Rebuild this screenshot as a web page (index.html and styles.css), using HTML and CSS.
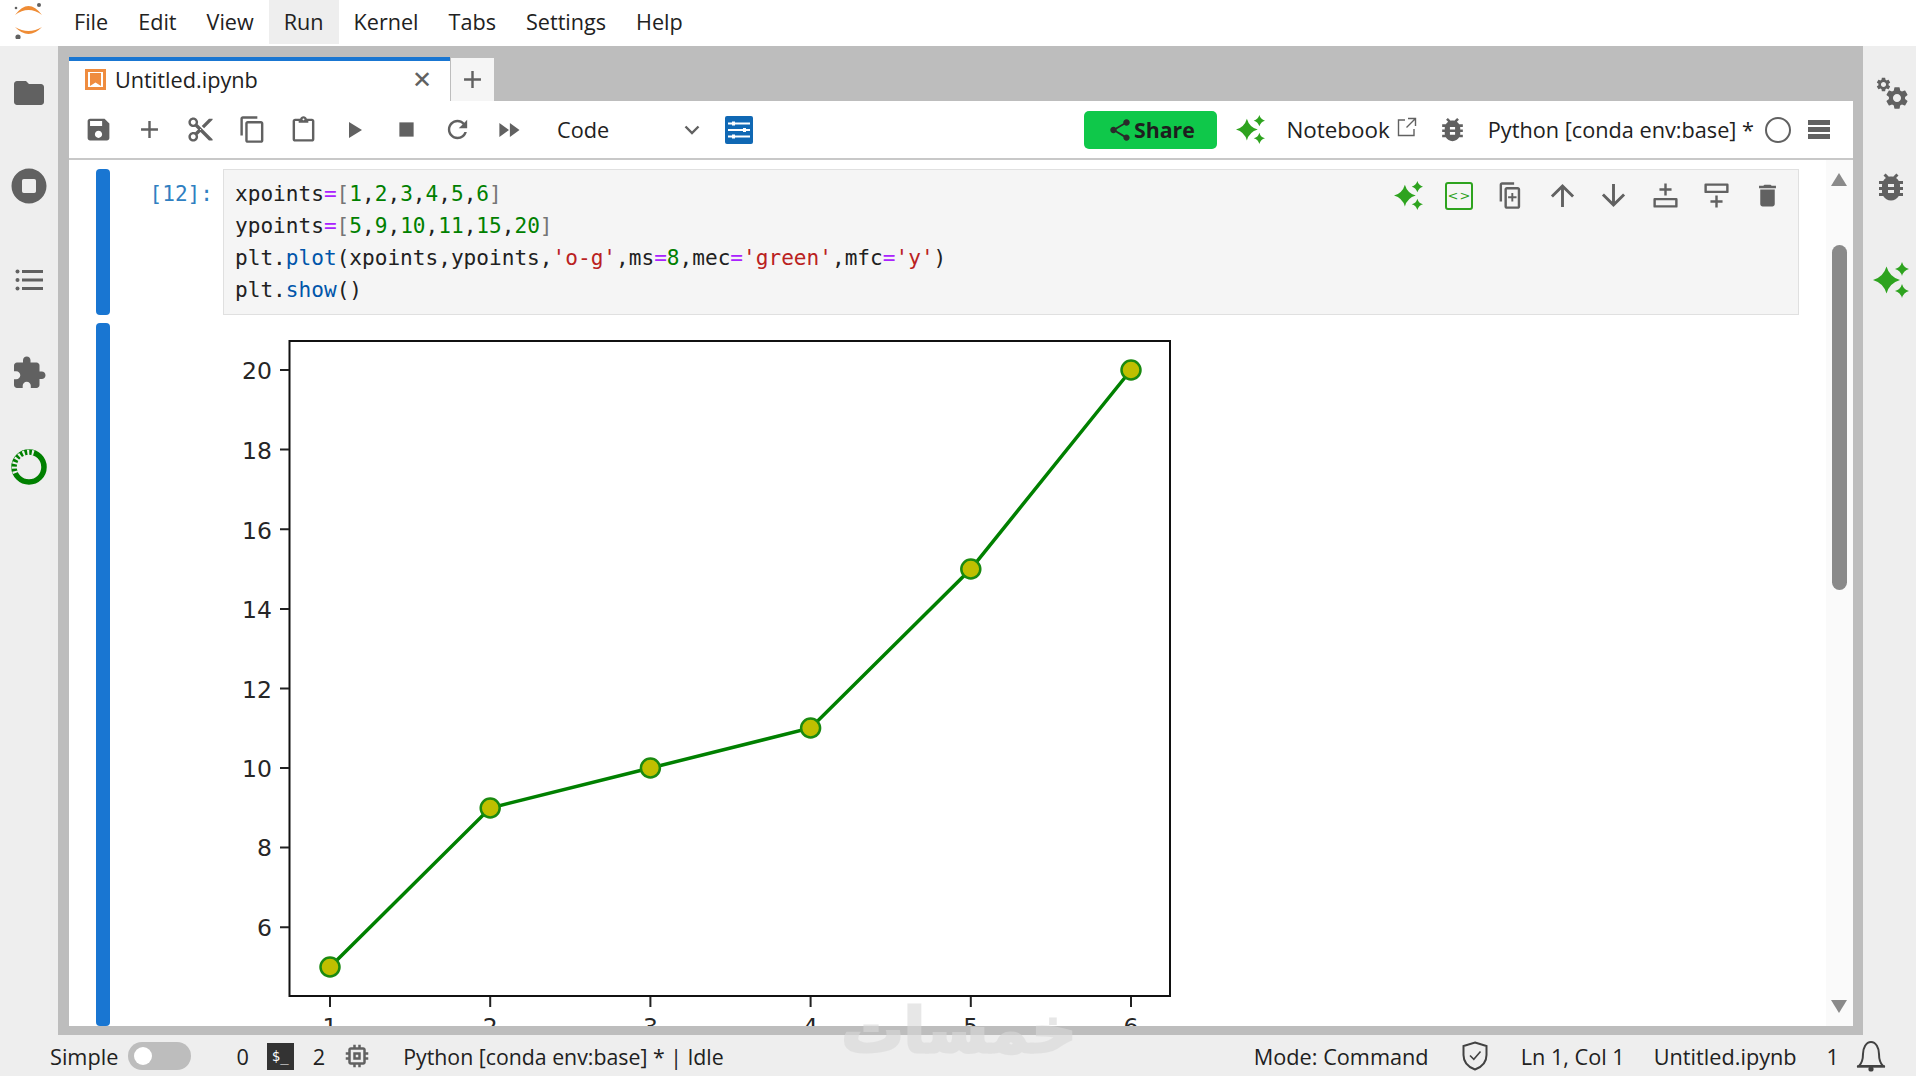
FILE: index.html
```html
<!DOCTYPE html>
<html lang="en">
<head>
<meta charset="utf-8">
<title>Untitled.ipynb</title>
<link rel="stylesheet" href="styles.css">
</head>
<body>
<svg class="defs" aria-hidden="true">
  <symbol id="i-save" viewBox="0 0 24 24"><path d="M17 3H5c-1.11 0-2 .9-2 2v14c0 1.1.89 2 2 2h14c1.1 0 2-.9 2-2V7l-4-4zm-5 16c-1.66 0-3-1.34-3-3s1.34-3 3-3 3 1.34 3 3-1.34 3-3 3zm3-10H5V5h10v4z"/></symbol>
  <symbol id="i-add" viewBox="0 0 24 24"><path d="M19 13h-6v6h-2v-6H5v-2h6V5h2v6h6v2z"/></symbol>
  <symbol id="i-cut" viewBox="0 0 24 24"><path d="M9.64 7.64c.23-.5.36-1.05.36-1.64 0-2.21-1.79-4-4-4S2 3.79 2 6s1.79 4 4 4c.59 0 1.14-.13 1.64-.36L10 12l-2.36 2.36C7.14 14.13 6.59 14 6 14c-2.21 0-4 1.79-4 4s1.79 4 4 4 4-1.79 4-4c0-.59-.13-1.14-.36-1.64L12 14l7 7h3v-1L9.64 7.64zM6 8c-1.1 0-2-.89-2-2s.9-2 2-2 2 .89 2 2-.9 2-2 2zm0 12c-1.1 0-2-.89-2-2s.9-2 2-2 2 .89 2 2-.9 2-2 2zm6-7.5c-.28 0-.5-.22-.5-.5s.22-.5.5-.5.5.22.5.5-.22.5-.5.5zM19 3l-6 6 2 2 7-7V3z"/></symbol>
  <symbol id="i-copy" viewBox="0 0 24 24"><path d="M16 1H4c-1.1 0-2 .9-2 2v14h2V3h12V1zm3 4H8c-1.1 0-2 .9-2 2v14c0 1.1.9 2 2 2h11c1.1 0 2-.9 2-2V7c0-1.1-.9-2-2-2zm0 16H8V7h11v14z"/></symbol>
  <symbol id="i-paste" viewBox="0 0 24 24"><path d="M19 3h-4.2C14.4 1.8 13.3 1 12 1s-2.400.8-2.800 2H5c-1.100 0-2 .9-2 2v15c0 1.100.9 2 2 2h14c1.100 0 2-.9 2-2V5c0-1.100-.9-2-2-2zm-7-.2c.45 0 .8.35.8.8s-.35.8-.8.8-.8-.35-.8-.8.35-.8.8-.8zM19 20H5V5h3v1.500h8V5h3v15z"/></symbol>
  <symbol id="i-play" viewBox="0 0 24 24"><path d="M6 4l13 8-13 8z"/></symbol>
  <symbol id="i-stop" viewBox="0 0 24 24"><rect x="3" y="3" width="18" height="18"/></symbol>
  <symbol id="i-refresh" viewBox="0 0 24 24"><path d="M17.650 6.350C16.200 4.900 14.210 4 12 4c-4.420 0-7.990 3.580-7.990 8s3.570 8 7.990 8c3.730 0 6.840-2.550 7.730-6h-2.080c-.82 2.330-3.040 4-5.650 4-3.310 0-6-2.690-6-6s2.690-6 6-6c1.660 0 3.140.69 4.220 1.780L13 11h7V4l-2.350 2.350z"/></symbol>
  <symbol id="i-ff" viewBox="0 0 24 16"><path d="M1 0l11 8-11 8zM13 0l11 8-11 8z"/></symbol>
  <symbol id="i-chev" viewBox="0 0 24 24"><path d="M5.500 8.500L12 15l6.500-6.500" fill="none" stroke="currentColor" stroke-width="2.400"/></symbol>
  <symbol id="i-bug" viewBox="0 0 24 24"><path d="M20 8h-2.810c-.45-.78-1.070-1.450-1.820-1.960L17 4.410 15.590 3l-2.170 2.170C12.960 5.060 12.490 5 12 5c-.49 0-.96.06-1.410.17L8.410 3 7 4.410l1.620 1.630C7.880 6.550 7.260 7.220 6.810 8H4v2h2.090c-.05.33-.09.66-.09 1v1H4v2h2v1c0 .34.04.67.09 1H4v2h2.810c1.040 1.790 2.970 3 5.190 3s4.150-1.210 5.190-3H20v-2h-2.090c.05-.33.09-.66.09-1v-1h2v-2h-2v-1c0-.34-.04-.67-.09-1H20V8zm-6 8h-4v-2h4v2zm0-4h-4v-2h4v2z"/></symbol>
  <symbol id="i-folder" viewBox="0 0 24 24"><path d="M10 4H4c-1.100 0-1.990.9-1.990 2L2 18c0 1.100.9 2 2 2h16c1.100 0 2-.9 2-2V8c0-1.100-.9-2-2-2h-8l-2-2z"/></symbol>
  <symbol id="i-stopc" viewBox="0 0 24 24"><path d="M12 2C6.480 2 2 6.480 2 12s4.480 10 10 10 10-4.480 10-10S17.520 2 12 2zm4 13a1 1 0 0 1-1 1H9a1 1 0 0 1-1-1V9a1 1 0 0 1 1-1h6a1 1 0 0 1 1 1v6z"/></symbol>
  <symbol id="i-list" viewBox="0 0 28 24"><circle cx="2.500" cy="3.500" r="2"/><circle cx="2.500" cy="12" r="2"/><circle cx="2.500" cy="20.500" r="2"/><rect x="7" y="2" width="21" height="3"/><rect x="7" y="10.500" width="21" height="3"/><rect x="7" y="19" width="21" height="3"/></symbol>
  <symbol id="i-puzzle" viewBox="0 0 24 24"><path d="M20.500 11H19V7c0-1.100-.9-2-2-2h-4V3.500C13 2.120 11.880 1 10.500 1S8 2.120 8 3.500V5H4c-1.100 0-1.990.9-1.990 2v3.800H3.500c1.490 0 2.700 1.210 2.700 2.700s-1.210 2.700-2.700 2.700H2V20c0 1.100.9 2 2 2h3.800v-1.500c0-1.490 1.210-2.700 2.700-2.700 1.490 0 2.700 1.210 2.700 2.700V22H17c1.100 0 2-.9 2-2v-4h1.500c1.380 0 2.500-1.120 2.500-2.500S21.880 11 20.500 11z"/></symbol>
  <symbol id="i-gear" viewBox="0 0 24 24"><path d="M19.140 12.940c.04-.3.06-.61.06-.94 0-.32-.02-.64-.07-.94l2.030-1.580c.18-.14.23-.41.12-.61l-1.920-3.320c-.12-.22-.37-.29-.59-.22l-2.390.96c-.5-.38-1.030-.7-1.620-.94l-.36-2.540c-.04-.24-.24-.41-.48-.41h-3.840c-.24 0-.43.17-.47.41l-.36 2.540c-.59.24-1.130.57-1.620.94l-2.390-.96c-.22-.08-.47 0-.59.22L2.740 8.870c-.12.21-.08.47.12.61l2.030 1.580c-.05.3-.09.63-.09.94s.02.64.07.94l-2.030 1.580c-.18.14-.23.41-.12.61l1.920 3.320c.12.22.37.29.59.22l2.390-.96c.5.38 1.030.7 1.620.94l.36 2.540c.05.24.24.41.48.41h3.840c.24 0 .44-.17.47-.41l.36-2.540c.59-.24 1.130-.56 1.620-.94l2.390.96c.22.08.47 0 .59-.22l1.920-3.320c.12-.22.07-.47-.12-.61l-2.010-1.580zM12 15.600c-1.980 0-3.600-1.620-3.600-3.600s1.620-3.600 3.600-3.600 3.600 1.620 3.600 3.600-1.620 3.600-3.600 3.600z"/></symbol>
  <symbol id="i-spark" viewBox="0 0 36 36"><path d="M13.500 4.500Q16.500 15 27 18 16.500 21 13.500 31.500 10.500 21 0 18 10.500 15 13.500 4.500zM29 0Q30.500 5.500 36 7 30.500 8.500 29 14 27.500 8.500 22 7 27.500 5.500 29 0zM29 22Q30.500 27.500 36 29 30.500 30.500 29 36 27.500 30.500 22 29 27.500 27.500 29 22z"/></symbol>
  <symbol id="i-share" viewBox="0 0 24 24"><path d="M18 16.080c-.76 0-1.440.3-1.960.77L8.910 12.700c.05-.23.09-.46.09-.7s-.04-.47-.09-.7l7.050-4.110c.54.5 1.250.81 2.040.81 1.660 0 3-1.340 3-3s-1.340-3-3-3-3 1.340-3 3c0 .24.04.47.09.7L8.040 9.810C7.500 9.310 6.790 9 6 9c-1.660 0-3 1.340-3 3s1.340 3 3 3c.79 0 1.500-.31 2.040-.81l7.120 4.160c-.05.21-.08.43-.08.65 0 1.610 1.310 2.920 2.920 2.920 1.610 0 2.920-1.310 2.920-2.920s-1.310-2.920-2.920-2.920z"/></symbol>
  <symbol id="i-chip" viewBox="0 0 24 24"><path d="M15 9H9v6h6V9zm-2 4h-2v-2h2v2zm8-2V9h-2V7c0-1.100-.9-2-2-2h-2V3h-2v2h-2V3H9v2H7c-1.100 0-2 .9-2 2v2H3v2h2v2H3v2h2v2c0 1.100.9 2 2 2h2v2h2v-2h2v2h2v-2h2c1.100 0 2-.9 2-2v-2h2v-2h-2v-2h2zm-4 6H7V7h10v10z"/></symbol>
  <symbol id="i-up" viewBox="2 2 20 20"><path d="M4 12l1.410 1.410L11 7.830V20h2V7.830l5.580 5.590L20 12l-8-8-8 8z"/></symbol>
  <symbol id="i-down" viewBox="2 2 20 20"><path d="M20 12l-1.410-1.410L13 16.170V4h-2v12.170l-5.580-5.590L4 12l8 8 8-8z"/></symbol>
  <symbol id="i-trash" viewBox="0 0 24 24"><path d="M6 19c0 1.100.9 2 2 2h8c1.100 0 2-.9 2-2V7H6v12zM19 4h-3.500l-1-1h-5l-1 1H5v2h14V4z"/></symbol>
  <symbol id="i-above" viewBox="0 0 24 24"><path d="M11 2h2v4h4v2h-4v4h-2V8H7V6h4z"/><path fill-rule="evenodd" d="M3 14h18a1 1 0 0 1 1 1v6a1 1 0 0 1-1 1H3a1 1 0 0 1-1-1v-6a1 1 0 0 1 1-1zm1 2v4h16v-4z"/></symbol>
  <symbol id="i-below" viewBox="0 0 24 24"><path d="M11 12h2v4h4v2h-4v4h-2v-4H7v-2h4z"/><path fill-rule="evenodd" d="M3 2h18a1 1 0 0 1 1 1v6a1 1 0 0 1-1 1H3a1 1 0 0 1-1-1V3a1 1 0 0 1 1-1zm1 2v4h16V4z"/></symbol>
  <symbol id="i-dup" viewBox="0 0 24 24"><path d="M15 1H5C3.900 1 3 1.900 3 3v14h2V3h10V1zm3 4H9c-1.100 0-2 .9-2 2v14c0 1.100.9 2 2 2h9c1.100 0 2-.9 2-2V7c0-1.100-.9-2-2-2zm0 16H9V7h9v14zM12.700 10h1.600v2.700H17v1.600h-2.700V17h-1.600v-2.700H10v-1.600h2.700z"/></symbol>
  <symbol id="i-ext" viewBox="0 0 20 20"><path d="M8 3H1.500v15.500H17V12M11 1.500h7.500V9M18 2l-8.500 8.500" fill="none" stroke="currentColor" stroke-width="1.400"/></symbol>
  <symbol id="i-shield" viewBox="0 0 26 30"><path d="M13 1.500L24.500 5v9c0 7-4.500 12-11.500 14.500C6 26 1.500 21 1.500 14V5z" fill="none" stroke="currentColor" stroke-width="2"/><path d="M8 14.500l3.800 3.800L18.500 10.500" fill="none" stroke="currentColor" stroke-width="1.600"/></symbol>
  <symbol id="i-bell" viewBox="0 0 30 32"><path d="M3 26c3-3 4-6 4-12 0-6 3-12 8-12s8 6 8 12c0 6 1 9 4 12z" fill="none" stroke="currentColor" stroke-width="2"/><path d="M1 26.500h28" stroke="currentColor" stroke-width="2.400"/><circle cx="15" cy="29" r="2.600"/></symbol>
</svg>

<header class="menubar">
  <svg class="logo" viewBox="0 0 28 36" aria-hidden="true">
    <path class="logo-arc" d="M1 12Q14.500-6 28 12 14.500 2 1 12z"/>
    <path class="logo-arc" d="M1 24Q14.500 38 28 24 14.500 32 1 24z"/>
    <circle class="logo-dot" cx="25" cy="2" r="2"/>
    <circle class="logo-dot" cx="2" cy="5" r="1.300"/>
    <circle class="logo-dot" cx="4" cy="34" r="2.600"/>
  </svg>
  <nav class="menu">
    <span class="menu-item">File</span>
    <span class="menu-item">Edit</span>
    <span class="menu-item">View</span>
    <span class="menu-item is-open">Run</span>
    <span class="menu-item">Kernel</span>
    <span class="menu-item">Tabs</span>
    <span class="menu-item">Settings</span>
    <span class="menu-item">Help</span>
  </nav>
</header>

<div class="workspace">
  <aside class="sidebar sidebar-left">
    <div class="side-slot"><svg class="ic ic-36"><use href="#i-folder"/></svg></div>
    <div class="side-slot"><svg class="ic ic-42"><use href="#i-stopc"/></svg></div>
    <div class="side-slot"><svg class="ic ic-list"><use href="#i-list"/></svg></div>
    <div class="side-slot"><svg class="ic ic-36"><use href="#i-puzzle"/></svg></div>
    <div class="side-slot">
      <svg class="ring" viewBox="0 0 36 36" aria-hidden="true">
        <circle class="ring-track" cx="18" cy="18" r="15"/>
        <path class="ring-dash" d="M4.500 24A15 15 0 0 1 24 4.500"/>
      </svg>
    </div>
  </aside>

  <main class="center">
    <div class="tabbar">
      <div class="tab">
        <svg class="nb-icon" viewBox="0 0 21 21" aria-hidden="true">
          <rect class="nb-frame" x="1.500" y="1.500" width="18" height="18"/>
          <path class="nb-mark" d="M5 4h11v13l-5.500-3.500L5 17z"/>
        </svg>
        <span class="tab-label">Untitled.ipynb</span>
        <span class="tab-close">&#x2715;</span>
      </div>
      <div class="tab-add"><svg class="ic ic-29"><use href="#i-add"/></svg></div>
    </div>

    <div class="toolbar">
      <span class="tool"><svg class="ic ic-29"><use href="#i-save"/></svg></span>
      <span class="tool"><svg class="ic ic-29"><use href="#i-add"/></svg></span>
      <span class="tool"><svg class="ic ic-29"><use href="#i-cut"/></svg></span>
      <span class="tool"><svg class="ic ic-29"><use href="#i-copy"/></svg></span>
      <span class="tool"><svg class="ic ic-29"><use href="#i-paste"/></svg></span>
      <span class="tool"><svg class="ic ic-play"><use href="#i-play"/></svg></span>
      <span class="tool"><svg class="ic ic-stop"><use href="#i-stop"/></svg></span>
      <span class="tool"><svg class="ic ic-29"><use href="#i-refresh"/></svg></span>
      <span class="tool"><svg class="ic ic-ff"><use href="#i-ff"/></svg></span>
      <div class="celltype">
        <span>Code</span>
        <svg class="ic ic-chev"><use href="#i-chev"/></svg>
      </div>
      <svg class="tune" viewBox="0 0 28 28" aria-hidden="true">
        <rect width="28" height="28" rx="2" class="tune-bg"/>
        <path class="tune-line" d="M3 7.500h22M3 14h22M3 20.500h22"/>
        <rect class="tune-knob" x="7" y="5.500" width="3" height="4"/>
        <rect class="tune-knob" x="18" y="12" width="3" height="4"/>
        <rect class="tune-knob" x="7" y="18.500" width="3" height="4"/>
      </svg>
      <div class="toolbar-right">
        <button class="share"><svg class="ic ic-share"><use href="#i-share"/></svg>Share</button>
        <svg class="ic ic-spark spark-top"><use href="#i-spark"/></svg>
        <span class="nb-link">Notebook</span>
        <svg class="ic ic-ext"><use href="#i-ext"/></svg>
        <svg class="ic ic-bug"><use href="#i-bug"/></svg>
        <span class="kernel-name">Python [conda env:base] *</span>
        <span class="kernel-state"></span>
        <span class="hamburger"></span>
      </div>
    </div>

    <div class="panel">
      <div class="notebook">
        <section class="cell">
          <div class="collapser"></div>
          <div class="prompt">[12]:</div>
          <div class="editor">
<pre class="code">xpoints<span class="op">=</span><span class="br">[</span><span class="num">1</span>,<span class="num">2</span>,<span class="num">3</span>,<span class="num">4</span>,<span class="num">5</span>,<span class="num">6</span><span class="br">]</span>
ypoints<span class="op">=</span><span class="br">[</span><span class="num">5</span>,<span class="num">9</span>,<span class="num">10</span>,<span class="num">11</span>,<span class="num">15</span>,<span class="num">20</span><span class="br">]</span>
plt.<span class="fn">plot</span>(xpoints,ypoints,<span class="str">'o-g'</span>,ms<span class="op">=</span><span class="num">8</span>,mec<span class="op">=</span><span class="str">'green'</span>,mfc<span class="op">=</span><span class="str">'y'</span>)
plt.<span class="fn">show</span>()</pre>
            <div class="cell-tools">
              <span class="tool"><svg class="ic ic-spark ic-29"><use href="#i-spark"/></svg></span>
              <span class="tool"><span class="codebox">&lt;&gt;</span></span>
              <span class="tool"><svg class="ic ic-29"><use href="#i-dup"/></svg></span>
              <span class="tool"><svg class="ic ic-29"><use href="#i-up"/></svg></span>
              <span class="tool"><svg class="ic ic-29"><use href="#i-down"/></svg></span>
              <span class="tool"><svg class="ic ic-29"><use href="#i-above"/></svg></span>
              <span class="tool"><svg class="ic ic-29"><use href="#i-below"/></svg></span>
              <span class="tool"><svg class="ic ic-29"><use href="#i-trash"/></svg></span>
            </div>
          </div>
        </section>
        <section class="cell cell-output">
          <div class="collapser"></div>
          <div class="prompt"></div>
          <svg class="plot" viewBox="223 323 960 720" aria-label="Line plot">
            <rect class="axes" x="289.500" y="341" width="880.500" height="655"/>
            <g class="ticks">
              <path d="M280 370h9M280 449.600h9M280 529.200h9M280 609h9M280 688.400h9M280 768h9M280 847.600h9M280 927.200h9"/>
              <path d="M330 997v10M490.200 997v10M650.400 997v10M810.600 997v10M970.800 997v10M1131 997v10"/>
            </g>
            <g class="ylabels">
              <text x="272" y="379">20</text><text x="272" y="458.500">18</text><text x="272" y="538.500">16</text><text x="272" y="618">14</text><text x="272" y="697.500">12</text><text x="272" y="777">10</text><text x="272" y="856">8</text><text x="272" y="936">6</text>
            </g>
            <g class="xlabels">
              <text x="330" y="1035">1</text><text x="490.200" y="1035">2</text><text x="650.400" y="1035">3</text><text x="810.600" y="1035">4</text><text x="970.800" y="1035">5</text><text x="1131" y="1035">6</text>
            </g>
            <polyline class="series" points="330,967 490.200,808 650.400,768 810.600,728 970.800,569 1131,370"/>
            <g class="markers">
              <circle cx="330" cy="967" r="9.500"/><circle cx="490.200" cy="808" r="9.500"/><circle cx="650.400" cy="768" r="9.500"/><circle cx="810.600" cy="728" r="9.500"/><circle cx="970.800" cy="569" r="9.500"/><circle cx="1131" cy="370" r="9.500"/>
            </g>
          </svg>
        </section>
      </div>
      <div class="scrollbar">
        <span class="arrow arrow-up"></span>
        <span class="thumb"></span>
        <span class="arrow arrow-down"></span>
      </div>
    </div>
  </main>

  <aside class="sidebar sidebar-right">
    <svg class="gears" viewBox="0 0 36 36" aria-hidden="true">
      <use href="#i-gear" x="8.500" y="10.500" width="27" height="27"/>
      <use href="#i-gear" x="0" y="2" width="17" height="17"/>
    </svg>
    <svg class="ic ic-36 side-bug"><use href="#i-bug"/></svg>
    <svg class="ic ic-spark ic-36 side-spark"><use href="#i-spark"/></svg>
  </aside>
</div>

<footer class="statusbar">
  <span class="st-simple">Simple</span>
  <span class="toggle"><span class="knob"></span></span>
  <span class="st-zero">0</span>
  <span class="term">$_</span>
  <span class="st-two">2</span>
  <svg class="ic ic-chip"><use href="#i-chip"/></svg>
  <span class="st-kernel">Python [conda env:base] * | Idle</span>
  <span class="st-mode">Mode: Command</span>
  <svg class="ic ic-shield"><use href="#i-shield"/></svg>
  <span class="st-ln">Ln 1, Col 1</span>
  <span class="st-file">Untitled.ipynb</span>
  <span class="st-one">1</span>
  <svg class="ic ic-bell"><use href="#i-bell"/></svg>
</footer>

<div class="watermark" lang="ar" dir="rtl">خمسات</div>
</body>
</html>
```

FILE: styles.css
```css
* { box-sizing: border-box; }
html, body { margin: 0; height: 100%; }
body {
  display: flex;
  flex-direction: column;
  height: 1076px;
  overflow: hidden;
  position: relative;
  background: #bdbdbd;
  color: #212121;
  font-family: "Open Sans", "Noto Sans", sans-serif;
  font-size: 21.700px;
}
.defs { position: absolute; width: 0; height: 0; }
.ic { fill: #616161; color: #616161; display: block; flex: none; }
.ic-29 { width: 29px; height: 29px; }
.ic-36 { width: 36px; height: 36px; }
.ic-42 { width: 42px; height: 42px; }
.ic-list { width: 28px; height: 24px; }
.ic-play { width: 24px; height: 24px; }
.ic-stop { width: 19px; height: 19px; }
.ic-ff { width: 22px; height: 14px; }
.ic-chev { width: 24px; height: 24px; }
.ic-share { width: 26px; height: 26px; fill: #2a2a2a; margin-right: 1px; }
.ic-ext { width: 20px; height: 20px; margin: -6px 0 0 7px; }
.ic-bug { width: 31px; height: 31px; margin-left: 20px; }
.ic-chip { width: 30px; height: 30px; }
.ic-shield { width: 26px; height: 30px; color: #424242; fill: #424242; }
.ic-bell { width: 30px; height: 32px; color: #424242; fill: #424242; }
.ic-spark { fill: #2ea31f; }
.spark-top { width: 31px; height: 29px; margin-left: 18px; }

/* menu */
.menubar {
  flex: none;
  height: 46px;
  background: #fff;
  display: flex;
  align-items: flex-start;
}
.logo { width: 28px; height: 36px; margin: 3px 0 0 14px; flex: none; }
.logo-arc { fill: #ef8c35; }
.logo-dot { fill: #616161; }
.menu { display: flex; margin-left: 17px; font-size: 21.600px; }
.menu-item { height: 44px; line-height: 43px; padding: 0 15px; }
.menu-item.is-open { background: #eee; }

/* frame */
.workspace { flex: 1; display: flex; min-height: 0; }
.sidebar { flex: none; background: #eee; }
.sidebar-left { width: 58px; display: flex; flex-direction: column; }
.side-slot { height: 93.500px; display: flex; align-items: center; justify-content: center; }
.ring { width: 36px; height: 36px; }
.ring-track { fill: none; stroke: #008000; stroke-width: 5.500; }
.ring-dash { fill: none; stroke: #eee; stroke-width: 5.500; stroke-dasharray: 2 2.500; }
.sidebar-right { width: 53px; display: flex; flex-direction: column; align-items: center; padding-top: 28px; }
.gears { width: 36px; height: 36px; fill: #616161; margin-left: 6px; overflow: visible; }
.side-bug { margin: 59px 0 0 2px; }
.side-spark { margin: 57px 0 0 2px; }

.center { flex: 1; min-width: 0; display: flex; flex-direction: column; padding: 11px 10px 9px 11px; }
.tabbar { flex: none; height: 44px; display: flex; align-items: flex-end; }
.tab {
  width: 381px;
  height: 44px;
  background: #fff;
  border-top: 4px solid #1976d2;
  display: flex;
  align-items: center;
  padding: 0 0 3px 16px;
}
.nb-icon { width: 21px; height: 21px; flex: none; margin-right: 9px; }
.nb-frame { fill: #fff; stroke: #ef8c3f; stroke-width: 3; }
.nb-mark { fill: #ef8c3f; }
.tab-label { flex: 1; }
.tab-close { width: 24px; margin-right: 16px; text-align: center; color: #616161; font-family: "DejaVu Sans", sans-serif; font-size: 24px; line-height: 24px; }
.tab-add {
  width: 44px;
  height: 43px;
  background: #f5f5f5;
  border: 1px solid #bdbdbd;
  border-width: 0 0 0 1px;
  display: flex;
  align-items: center;
  justify-content: center;
}

.toolbar {
  flex: none;
  height: 59px;
  background: #fff;
  border-bottom: 2px solid #c8c8c8;
  display: flex;
  align-items: center;
  padding: 0 23px 0 3.500px;
}
.tool { width: 51.400px; height: 29px; flex: none; display: flex; align-items: center; justify-content: center; }
.celltype { width: 174.500px; flex: none; display: flex; align-items: center; justify-content: space-between; padding: 0 6px 0 22px; color: #212121; }
.tune { width: 28px; height: 28px; margin-left: 15px; flex: none; }
.tune-bg { fill: #1068b4; }
.tune-line { stroke: #fff; stroke-width: 2; }
.tune-knob { fill: #fff; }
.toolbar-right { margin-left: auto; display: flex; align-items: center; }
.share {
  width: 133px;
  height: 38px;
  border: 0;
  border-radius: 5px;
  background: #0fc84a;
  color: #1e1e1e;
  font: 700 21.300px "Open Sans", "Noto Sans", sans-serif;
  display: flex;
  align-items: center;
  justify-content: center;
  padding: 0;
}
.nb-link { margin-left: 20px; font-size: 22.400px; }
.kernel-name { margin-left: 20px; }
.kernel-state { width: 26px; height: 26px; border: 2px solid #616161; border-radius: 50%; margin-left: 11px; flex: none; }
.hamburger {
  width: 22px;
  height: 19px;
  margin-left: 17px;
  flex: none;
  background: repeating-linear-gradient(#616161 0 5px, #fff 5px 7px);
}

/* notebook */
.panel { flex: 1; min-height: 0; background: #fff; display: flex; }
.notebook { flex: 1; min-width: 0; overflow: hidden; padding: 9px 0 0 27px; display: flex; flex-direction: column; gap: 8px; }
.cell { display: flex; flex: none; }
.cell-output { flex: 1; min-height: 0; }
.collapser { width: 14px; flex: none; background: #1976d2; border-radius: 4px; }
.prompt {
  width: 113px;
  flex: none;
  padding: 9px 10px 0 0;
  text-align: right;
  color: #307fc1;
  font: 21.100px/32px "DejaVu Sans Mono", monospace;
}
.editor {
  position: relative;
  width: 1576px;
  height: 146px;
  background: #f5f5f5;
  border: 1px solid #e0e0e0;
  padding: 7.500px 11px;
}
.code { margin: 0; font: 21.100px/32px "DejaVu Sans Mono", monospace; color: #212121; }
.op { color: #aa22ff; }
.br { color: #757575; }
.num { color: #008000; }
.str { color: #ba2121; }
.fn { color: #0055aa; }
.cell-tools { position: absolute; top: 11px; right: 4.500px; display: flex; }
.codebox {
  width: 28px;
  height: 28px;
  border: 2px solid #2ea31f;
  border-radius: 3px;
  color: #2ea31f;
  font: 13px/24px "DejaVu Sans", sans-serif;
  letter-spacing: 1px;
  text-align: center;
}
.plot { width: 960px; height: 720px; flex: none; display: block; }
.axes { fill: #fff; stroke: #111; stroke-width: 2; }
.ticks path { stroke: #222; stroke-width: 2; fill: none; }
.ylabels text, .xlabels text { font: 23.500px "DejaVu Sans", sans-serif; fill: #262626; }
.ylabels text { text-anchor: end; }
.xlabels text { text-anchor: middle; }
.series { fill: none; stroke: #008000; stroke-width: 3.500; }
.markers circle { fill: #bfbf00; stroke: #1a8a10; stroke-width: 2.500; }

.scrollbar { width: 27px; flex: none; background: #fafafa; position: relative; }
.arrow { position: absolute; left: 5px; width: 0; height: 0; border-left: 8.500px solid transparent; border-right: 8.500px solid transparent; }
.arrow-up { top: 13px; border-bottom: 13px solid #8a8a8a; }
.arrow-down { bottom: 13px; border-top: 13px solid #8a8a8a; }
.thumb { position: absolute; left: 6px; top: 85px; width: 15px; height: 345px; background: #8a8a8a; border-radius: 8px; }

/* status */
.statusbar { flex: none; height: 41px; background: #eee; display: flex; align-items: center; padding: 1px 0 0 50px; }
.toggle { width: 63px; height: 28px; margin-left: 10px; border-radius: 14px; background: #bdbdbd; display: flex; align-items: center; padding-left: 6px; flex: none; }
.knob { width: 18px; height: 18px; border-radius: 50%; background: #fff; }
.st-zero { margin-left: 45px; }
.term { width: 27px; height: 27px; margin-left: 18px; background: #333; color: #fff; font: 14px/27px "DejaVu Sans Mono", monospace; text-align: center; flex: none; }
.st-two { margin-left: 19px; }
.ic-chip { margin-left: 17px; }
.st-kernel { margin-left: 31px; font-size: 21.300px; }
.st-mode { margin-left: auto; }
.ic-shield { margin-left: 33px; }
.st-ln { margin-left: 33px; }
.st-file { margin-left: 29px; }
.st-one { margin-left: 30px; }
.ic-bell { margin: 0 30px 0 17px; }

.watermark {
  position: absolute;
  left: 809px;
  top: 1000px;
  width: 300px;
  text-align: center;
  font: 700 62px/62px "DejaVu Sans", sans-serif;
  color: #d8d8d8;
  -webkit-text-stroke: 3px #d8d8d8;
  opacity: .6;
  pointer-events: none;
}
```
